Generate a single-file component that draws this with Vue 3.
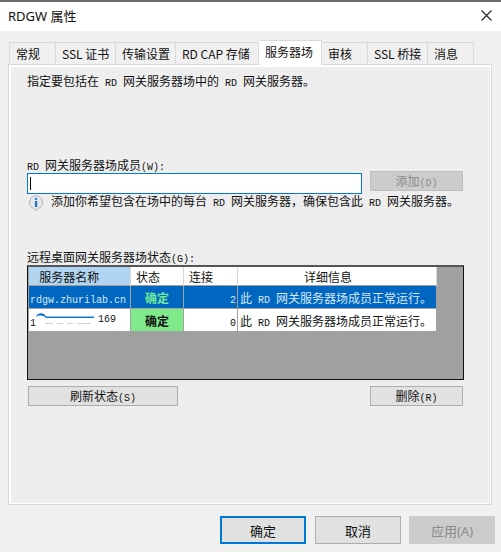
<script setup>
const tabs = [
  { label: '常规', width: 47 },
  { label: 'SSL 证书', width: 60 },
  { label: '传输设置', width: 60 },
  { label: 'RD CAP 存储', width: 83 },
  { label: '服务器场', width: 63 },
  { label: '审核', width: 46 },
  { label: 'SSL 桥接', width: 60 },
  { label: '消息', width: 46 },
];
const activeTab = '服务器场';
</script>

<template>
  <div class="dialog">
    <div class="title-bar">
      <span>RDGW 属性</span>
      <svg class="close" width="11" height="11" viewBox="0 0 11 11">
        <path d="M0.5 0.5L10.5 10.5M10.5 0.5L0.5 10.5" stroke="#222" stroke-width="1.1" fill="none" />
      </svg>
    </div>

    <div class="content">
      <div class="tabs">
        <div
          v-for="tab in tabs"
          :key="tab.label"
          class="tab"
          :class="{ active: tab.label === activeTab }"
          :style="{ width: tab.width + 'px' }"
        >{{ tab.label }}</div>
      </div>

      <div class="panel">
        <p class="intro">指定要包括在<span class="en"> RD </span>网关服务器场中的<span class="en"> RD </span>网关服务器。</p>

        <p class="member-label"><span class="en">RD </span>网关服务器场成员<span class="en">(W):</span></p>
        <div class="add-row">
          <div class="edit"><i class="caret"></i></div>
          <button class="btn add" disabled>添加<span class="en">(D)</span></button>
        </div>
        <div class="hint">
          <svg width="18" height="18" viewBox="0 0 18 18">
            <path d="M9 16.500L6.500 14.500A6.600 6.600 0 1 1 11.500 14.500Z" fill="#e4e6ea" stroke="#b4b8bf" />
            <rect x="8" y="4" width="2.200" height="2" fill="#2f7fd0" />
            <rect x="8" y="7" width="2.200" height="6" fill="#1f6fc4" />
          </svg>
          <span>添加你希望包含在场中的每台<span class="en"> RD </span>网关服务器，确保包含此<span class="en"> RD </span>网关服务器。</span>
        </div>

        <p class="status-label">远程桌面网关服务器场状态<span class="en">(G):</span></p>
        <div class="list">
          <table>
            <thead>
              <tr>
                <th class="sorted">服务器名称</th>
                <th class="left">状态</th>
                <th class="left">连接</th>
                <th class="info">详细信息</th>
              </tr>
            </thead>
            <tbody>
              <tr class="selected">
                <td class="name"><span class="en">rdgw.zhurilab.cn</span></td>
                <td class="state">确定</td>
                <td class="num"><span class="en">2</span></td>
                <td class="detail">此<span class="en"> RD </span>网关服务器场成员正常运行。</td>
              </tr>
              <tr>
                <td class="name ip">
                  <span class="en">1</span>
                  <svg class="redact" width="60" height="14" viewBox="0 0 60 14">
                    <path d="M1 5C2 0 9 0 11 4.500L59 4.500V6L11 6C8 3 4 3 1 5Z" fill="#0a78d2" />
                    <path d="M10 11.500h8M22 11.500h6M32 11.500h6M42 11.500h14" stroke="#c9d4dc" fill="none" />
                  </svg>
                  <span class="en last">169</span>
                </td>
                <td class="state ok">确定</td>
                <td class="num"><span class="en">0</span></td>
                <td class="detail">此<span class="en"> RD </span>网关服务器场成员正常运行。</td>
              </tr>
            </tbody>
          </table>
        </div>
        <div class="list-actions">
          <button class="btn refresh">刷新状态<span class="en">(S)</span></button>
          <button class="btn remove">删除<span class="en">(R)</span></button>
        </div>
      </div>

      <div class="footer">
        <button class="foot-btn primary">确定</button>
        <button class="foot-btn">取消</button>
        <button class="foot-btn apply" disabled>应用(A)</button>
      </div>
    </div>
  </div>
</template>

<style scoped>
.dialog {
  width: 501px;
  height: 552px;
  box-sizing: border-box;
  border-top: 2px solid #6e6e6e;
  background: #f0f0f0;
  color: #111;
  font-family: "Noto Sans CJK SC", "Liberation Sans", sans-serif;
  font-size: 12px;
  overflow: hidden;
}

.en {
  font-family: "Liberation Mono", monospace;
  font-size: 10px;
  white-space: pre;
}

p {
  margin: 0;
  height: 16px;
  line-height: 16px;
}

.title-bar {
  height: 29px;
  box-sizing: border-box;
  background: #fff;
  display: flex;
  align-items: center;
  justify-content: space-between;
  padding: 0 9px 3px 8px;
  font-family: "Noto Sans", "Noto Sans CJK SC", sans-serif;
  font-size: 13px;
}

.content {
  padding: 9px 9px 0 8px;
}

.tabs {
  display: flex;
  align-items: flex-end;
  height: 24px;
  padding-left: 1px;
}

.tab {
  height: 22px;
  flex: none;
  box-sizing: border-box;
  padding: 0 0 0 6px;
  border: 1px solid #d9d9d9;
  border-left: none;
  border-bottom: none;
  line-height: 21px;
  white-space: nowrap;
}

.tab:first-child {
  border-left: 1px solid #d9d9d9;
}

.tab.active {
  height: 25px;
  margin-bottom: -1px;
  background: #fff;
  position: relative;
  z-index: 1;
}

.panel {
  height: 441px;
  box-sizing: border-box;
  border: 1px solid #d9d9d9;
  box-shadow: inset 2px 2px 0 #fff, inset -1px -1px 0 #fff;
  background: #eeeeee;
  padding: 8px 0 0 18px;
}

.member-label {
  margin-top: 68px;
}

.add-row {
  display: flex;
  align-items: flex-start;
  height: 21px;
}

.edit {
  width: 335px;
  height: 21px;
  box-sizing: border-box;
  border: 1px solid #0078d7;
  background: #fff;
  display: flex;
  align-items: center;
  padding-left: 2px;
}

.caret {
  width: 1px;
  height: 13px;
  background: #000;
}

.btn {
  height: 20px;
  padding: 0;
  box-sizing: border-box;
  border: 1px solid #adadad;
  background: #e1e1e1;
  color: #111;
  font: inherit;
  line-height: 17px;
}

.add {
  width: 93px;
  margin: -2px 0 0 8px;
  background: #cccccc;
  border-color: #bfbfbf;
  color: #8a8a8a;
}

.hint {
  display: flex;
  align-items: flex-start;
  gap: 6px;
  height: 18px;
  line-height: 13px;
  white-space: nowrap;
}

.status-label {
  margin-top: 37px;
}

.list {
  width: 437px;
  height: 115px;
  box-sizing: border-box;
  border: 1px solid #111;
  border-top: 2px solid #555;
  background: #a0a0a0;
}

table {
  width: 409px;
  table-layout: fixed;
  border-collapse: collapse;
}

th {
  height: 18px;
  padding: 0;
  background: #fff;
  font-weight: 400;
  border-right: 1px solid #d9d9d9;
}

th.sorted {
  background: #b1d5f0;
  width: 102px;
  padding-right: 20px;
  box-sizing: border-box;
}

th.left {
  text-align: left;
  padding-left: 5px;
  box-sizing: border-box;
}

th:nth-child(2) {
  width: 53px;
}

th:nth-child(3) {
  width: 54px;
}

th.info {
  padding-right: 18px;
}

td {
  height: 22px;
  padding: 0;
  background: #fff;
  border: 1px solid #a0a0a0;
  white-space: nowrap;
  overflow: hidden;
}

.selected td {
  background: #0067c0;
  color: #d7e9f8;
}

.name {
  padding-left: 1px;
}

.ip {
  position: relative;
}

.redact {
  position: absolute;
  left: 6px;
  top: 3px;
}

.last {
  position: absolute;
  left: 69px;
  top: 5px;
}

.state {
  text-align: center;
  font-weight: 700;
}

.selected .state {
  color: #74e99a;
}

.state.ok {
  background: #7eea8a;
}

.num {
  text-align: right;
  padding-right: 1px;
}

.detail {
  padding-left: 2px;
}

.list-actions {
  display: flex;
  justify-content: space-between;
  width: 435px;
  margin: 6px 0 0 1px;
}

.refresh {
  width: 150px;
}

.remove {
  width: 93px;
}

.footer {
  display: flex;
  justify-content: flex-end;
  gap: 9px;
  margin: 11px -3px 0 0;
}

.foot-btn {
  width: 86px;
  height: 28px;
  box-sizing: border-box;
  border: 1px solid #adadad;
  background: #e1e1e1;
  padding: 0;
  color: #111;
  font-family: "Noto Sans", "Noto Sans CJK SC", sans-serif;
  font-size: 13px;
}

.foot-btn.primary {
  border: 2px solid #0078d7;
}

.foot-btn.apply {
  margin-left: -1px;
  background: #cccccc;
  border-color: #cccccc;
  color: #8a8a8a;
}
</style>
